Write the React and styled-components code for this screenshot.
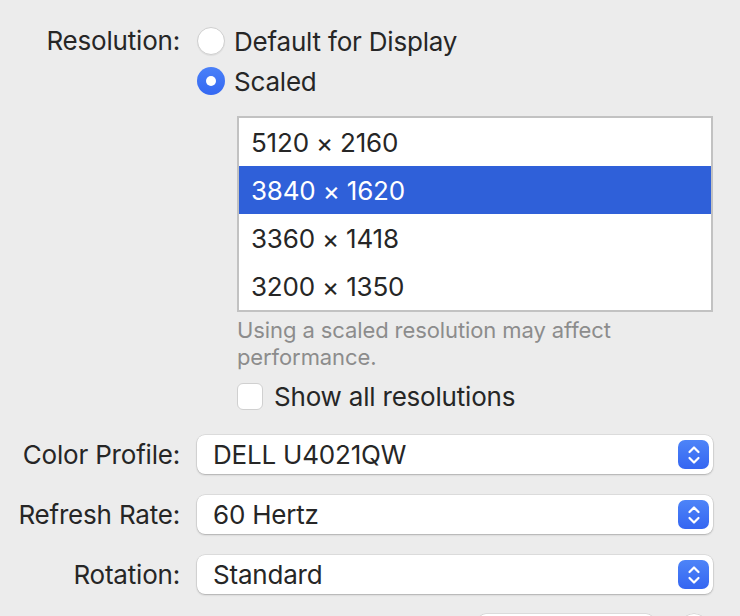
import React from "react";
import styled, { createGlobalStyle } from "styled-components";

const Global = createGlobalStyle`
  html, body { margin: 0; padding: 0; background: #ececec; }
  body { font-family: Inter, "Noto Sans", "Liberation Sans", sans-serif; color: #262626; overflow: hidden; }
`;

const Page = styled.div`
  width: 740px;
  height: 616px;
  overflow: hidden;
  padding-top: 27px;
  box-sizing: border-box;
`;

const Form = styled.div`
  display: grid;
  grid-template-columns: 180px 516px;
  column-gap: 17px;
  align-items: start;
`;

const Label = styled.div`
  font-size: 26px;
  line-height: ${(p) => p.$lh || 28}px;
  text-align: right;
  white-space: nowrap;
  letter-spacing: -0.2px;
`;

const Section = styled.div`
  display: flex;
  flex-direction: column;
  margin-bottom: ${(p) => p.$mb || 0}px;
`;

const RadioGroup = styled.div`
  display: flex;
  flex-direction: column;
  gap: 12px;
`;

const RadioRow = styled.label`
  display: flex;
  align-items: center;
  gap: 9px;
  font-size: 26px;
  letter-spacing: -0.2px;
  height: 28px;
`;

const RadioDot = styled.span`
  width: 28px;
  height: 28px;
  border-radius: 50%;
  box-sizing: border-box;
  flex: none;
  display: flex;
  align-items: center;
  justify-content: center;
  background: ${(p) => (p.$on ? "linear-gradient(#4a80f8, #3468f2)" : "#ffffff")};
  border: ${(p) => (p.$on ? "none" : "1px solid #cfcfcf")};
  box-shadow: ${(p) => (p.$on ? "none" : "0 1px 1px rgba(0,0,0,0.06)")};
  &::after {
    content: "";
    display: ${(p) => (p.$on ? "block" : "none")};
    width: 10px;
    height: 10px;
    border-radius: 50%;
    background: #fff;
  }
`;

const Indent = styled.div`
  margin-left: 40px;
  display: flex;
  flex-direction: column;
`;

const ListBox = styled.div`
  margin-top: 21px;
  width: 476px;
  border: 2px solid #c2c2c2;
  background: #fff;
  box-sizing: border-box;
  display: flex;
  flex-direction: column;
`;

const ListRow = styled.div`
  height: 48px;
  display: flex;
  align-items: center;
  padding-left: 12px;
  font-size: 26px;
  letter-spacing: -0.2px;
  background: ${(p) => (p.$sel ? "#2f60d9" : "transparent")};
  color: ${(p) => (p.$sel ? "#ffffff" : "#262626")};
`;

const Help = styled.div`
  margin-top: 5px;
  font-size: 22px;
  line-height: 27px;
  letter-spacing: -0.1px;
  color: #8c8c8c;
  width: 440px;
`;

const CheckRow = styled.label`
  margin-top: 12px;
  display: flex;
  align-items: center;
  gap: 11px;
  font-size: 26px;
  letter-spacing: -0.2px;
  height: 27px;
`;

const CheckBox = styled.span`
  width: 26px;
  height: 27px;
  box-sizing: border-box;
  border-radius: 6px;
  border: 1px solid #d0d0d0;
  background: #fff;
  flex: none;
`;

const Popup = styled.div`
  height: 39px;
  box-sizing: border-box;
  background: #fff;
  border-radius: 8px;
  box-shadow: 0 0 0 0.5px rgba(0, 0, 0, 0.12), 0 1px 2px rgba(0, 0, 0, 0.22);
  display: flex;
  align-items: center;
  justify-content: space-between;
  padding: 0 4px 0 16px;
  font-size: 26px;
  letter-spacing: -0.2px;
  margin-bottom: ${(p) => p.$mb || 0}px;
`;

const Stepper = styled.span`
  width: 31px;
  height: 29px;
  border-radius: 7px;
  background: linear-gradient(#4d84f8, #3566f1);
  display: flex;
  align-items: center;
  justify-content: center;
`;

const Bottom = styled.div`
  display: flex;
  justify-content: flex-end;
  align-items: flex-start;
  gap: 26px;
  width: 708px;
  margin-top: 20px;
`;

const Button = styled.div`
  width: 176px;
  height: 40px;
  border-radius: 8px;
  background: #fff;
  box-shadow: 0 0 0 0.5px rgba(0, 0, 0, 0.12), 0 1px 2px rgba(0, 0, 0, 0.22);
`;

const HelpButton = styled.div`
  width: 28px;
  height: 28px;
  border-radius: 50%;
  background: #fff;
  box-shadow: 0 0 0 0.5px rgba(0, 0, 0, 0.15), 0 1px 2px rgba(0, 0, 0, 0.2);
`;

const Chevrons = () => (
  <svg width="16" height="22" viewBox="0 0 16 22" fill="none">
    <path d="M3.5 8 L8 3.5 L12.5 8" stroke="#fff" strokeWidth="2.2" strokeLinecap="round" strokeLinejoin="round" />
    <path d="M3.5 14 L8 18.5 L12.5 14" stroke="#fff" strokeWidth="2.2" strokeLinecap="round" strokeLinejoin="round" />
  </svg>
);

const Select = ({ value, mb }) => (
  <Popup $mb={mb}>
    <span>{value}</span>
    <Stepper>
      <Chevrons />
    </Stepper>
  </Popup>
);

export default function App() {
  const res = ["5120 × 2160", "3840 × 1620", "3360 × 1418", "3200 × 1350"];
  return (
    <Page>
      <Global />
      <Form>
        <Label>Resolution:</Label>
        <Section $mb={25}>
          <RadioGroup>
            <RadioRow>
              <RadioDot />
              Default for Display
            </RadioRow>
            <RadioRow>
              <RadioDot $on />
              Scaled
            </RadioRow>
          </RadioGroup>
          <Indent>
            <ListBox>
              {res.map((r, i) => (
                <ListRow key={r} $sel={i === 1}>
                  {r}
                </ListRow>
              ))}
            </ListBox>
            <Help>Using a scaled resolution may affect performance.</Help>
            <CheckRow>
              <CheckBox />
              Show all resolutions
            </CheckRow>
          </Indent>
        </Section>

        <Label $lh={39}>Color Profile:</Label>
        <Select value="DELL U4021QW" mb={21} />

        <Label $lh={39}>Refresh Rate:</Label>
        <Select value="60 Hertz" mb={21} />

        <Label $lh={39}>Rotation:</Label>
        <Select value="Standard" />
      </Form>
      <Bottom>
        <Button />
        <HelpButton />
      </Bottom>
    </Page>
  );
}
